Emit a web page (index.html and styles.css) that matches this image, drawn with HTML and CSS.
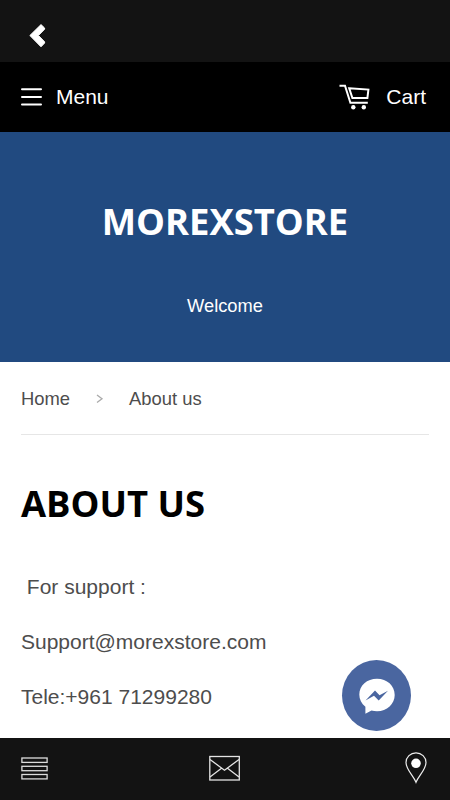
FILE: index.html
```html
<!DOCTYPE html>
<html lang="en">
<head>
  <meta charset="UTF-8">
  <meta name="viewport" content="width=device-width, initial-scale=1">
  <title>About us - Morexstore</title>
  <link rel="stylesheet" href="styles.css">
</head>
<body>

  <div class="app">
    <header class="top-bar">
      <svg class="back-icon" width="18" height="26" viewBox="0 0 18 26">
        <path d="M12 1.6 L15.6 5 V6.2 L9.4 12.5 L15.6 18.8 V20 L12 23.8 L0.9 12.5 Z" fill="#fff" stroke="#fff" stroke-linejoin="round"/>
      </svg>
    </header>

    <nav class="nav-bar">
      <a class="nav-link">
        <svg class="menu-icon" width="21" height="18" viewBox="0 0 21 18">
          <path d="M1 1.3 H20 M1 9 H20 M1 16.6 H20" stroke="#fff" stroke-width="2" stroke-linecap="round"/>
        </svg>
        <span>Menu</span>
      </a>
      <a class="nav-link cart-link">
        <svg width="32" height="26" viewBox="0 0 32 26" fill="none" stroke="#fff">
          <path d="M0.5 1.7 H6 L11.4 18.7 H28.8" stroke-width="2"/>
          <path d="M10.2 4.3 L29.4 5.6 L28.4 14 H13.4 Z" stroke-width="2"/>
          <circle cx="14.3" cy="23.2" r="2.2" fill="#fff" stroke="none"/>
          <circle cx="24.8" cy="23.2" r="2.2" fill="#fff" stroke="none"/>
        </svg>
        <span>Cart</span>
      </a>
    </nav>

    <section class="hero">
      <h1>MOREXSTORE</h1>
      <p>Welcome</p>
    </section>

    <main class="content">
      <div class="breadcrumb">
        <a>Home</a>
        <svg width="8" height="10" viewBox="0 0 8 10">
          <path d="M1 1 L6 4.8 L1 8.6" fill="none" stroke="#aaa" stroke-width="1.3"/>
        </svg>
        <span>About us</span>
      </div>

      <h2>ABOUT US</h2>
      <p>&nbsp;For support :</p>
      <p>Support@morexstore.com</p>
      <p>Tele:+961 71299280</p>
    </main>

    <footer class="tab-bar">
      <svg width="27" height="23" viewBox="0 0 27 23" fill="none" stroke="#ddd" stroke-width="1.3">
        <rect x="0.9" y="1" width="25.2" height="4.4"/>
        <rect x="0.9" y="9.3" width="25.2" height="4.4"/>
        <rect x="0.9" y="17.5" width="25.2" height="4.4"/>
      </svg>
      <svg width="32" height="26" viewBox="0 0 32 26" fill="none" stroke="#e4e4e4" stroke-width="1.3">
        <rect x="0.8" y="1.5" width="29.5" height="23.5"/>
        <path d="M1 4.5 L15.5 15.2 L30 4.5 M1 22 L12.5 13.2 M30 22 L18.5 13.2"/>
      </svg>
      <svg width="22" height="32" viewBox="0 0 22 32">
        <path d="M11 30.3 C8.5 24 1 17.5 1 10.5 A10 9.7 0 0 1 21 10.5 C21 17.5 13.5 24 11 30.3 Z" fill="none" stroke="#eee" stroke-width="1.2"/>
        <circle cx="11" cy="11.3" r="4.8" fill="#fff"/>
      </svg>
    </footer>

    <!-- Messenger chat button -->
    <a class="messenger">
      <svg width="36" height="36" viewBox="0 0 36 36">
        <path d="M18 0.8 C8 0.8 0.3 7.6 0.3 16.5 C0.3 21.5 2.5 25.6 6.4 28.8 V35.8 L12.5 32.5 C14.2 33 16 33.3 18 33.3 C28 33.3 35.7 26 35.7 17 C35.7 7.6 28 0.8 18 0.8 Z" fill="#fff"/>
        <path d="M6.5 22.5 L16 12.5 L20.5 17.2 L29 12.7 L19.7 22.5 L15 17.8 Z" fill="#4a66a0"/>
      </svg>
    </a>
  </div>

</body>
</html>
```
FILE: styles.css
```css
html, body {
  margin: 0;
  padding: 0;
  height: 100%;
  font-family: "Liberation Sans", Arial, sans-serif;
  background: #fff;
}

.app {
  position: relative;
  display: flex;
  flex-direction: column;
  height: 800px;
  overflow: hidden;
}

.top-bar {
  height: 62px;
  flex: none;
  background: #131313;
}

.back-icon {
  display: block;
  margin: 23px 0 0 29px;
}

.nav-bar {
  display: flex;
  justify-content: space-between;
  align-items: center;
  flex: none;
  height: 70px;
  padding: 0 24px 0 21px;
  box-sizing: border-box;
  background: #000;
  color: #fff;
  font-size: 21px;
}

.nav-link {
  display: flex;
  align-items: center;
  gap: 14px;
}

.cart-link {
  gap: 15px;
}

.hero {
  flex: none;
  height: 230px;
  background: #214a80;
  color: #fff;
  text-align: center;
}

.hero h1 {
  margin: 0;
  padding-top: 64px;
  font: bold 36.4px/50px "Open Sans", sans-serif;
}

.hero p {
  margin: 0;
  padding-top: 48px;
  font-size: 18.3px;
  line-height: 24px;
}

.content {
  flex: 1;
  min-height: 0;
  padding: 0 21px;
  overflow: hidden;
  color: #4d4d4d;
}

.breadcrumb {
  display: flex;
  align-items: center;
  gap: 25.5px;
  height: 70px;
  padding-top: 2px;
  border-bottom: 1px solid #e6e6e6;
  font-size: 18.4px;
}

.content h2 {
  margin: 43px 0 44px;
  color: #000;
  font: bold 36.4px/50px "Open Sans", sans-serif;
}

.content p {
  margin: 0 0 25px;
  font-size: 21px;
  line-height: 30px;
}

.tab-bar {
  display: flex;
  justify-content: space-between;
  align-items: center;
  flex: none;
  height: 62px;
  padding: 0 23px 2px 21px;
  box-sizing: border-box;
  background: #131313;
}

.tab-bar svg:nth-child(2) {
  margin-right: 4px;
}

.messenger {
  position: absolute;
  right: 39px;
  bottom: 69px;
  display: flex;
  justify-content: center;
  align-items: center;
  width: 69px;
  height: 71px;
  border-radius: 50%;
  background: #4a66a0;
}
```
